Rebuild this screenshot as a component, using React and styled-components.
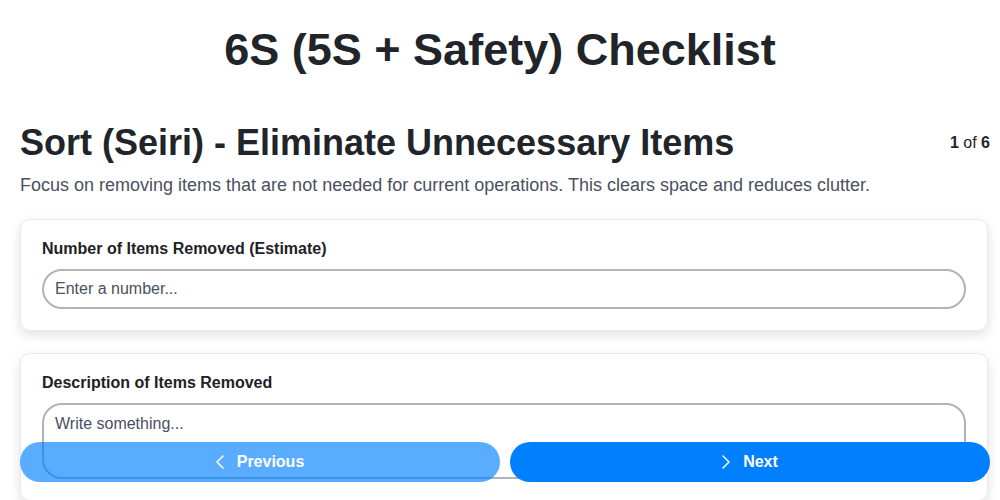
import React from "react";
import styled, { createGlobalStyle } from "styled-components";
import { ChevronLeft, ChevronRight } from "lucide-react";

const GlobalStyle = createGlobalStyle`
  html, body { margin: 0; padding: 0; background: #ffffff; }
  body { font-family: "Liberation Sans", Arial, sans-serif; color: #212529; }
  * { box-sizing: border-box; }
`;

const Header = styled.header`
  padding: 23px 0 0;
`;

const Title = styled.h1`
  margin: 0;
  font-size: 45px;
  line-height: 54px;
  font-weight: 700;
  text-align: center;
  color: #212529;
`;

const Page = styled.main`
  padding: 0 10px 0 20px;
`;

const StepHeader = styled.div`
  display: flex;
  align-items: center;
  justify-content: space-between;
  margin-top: 44px;
`;

const StepTitle = styled.h2`
  margin: 0;
  font-size: 36px;
  line-height: 43px;
  font-weight: 700;
  color: #212529;
`;

const Counter = styled.div`
  font-size: 16px;
  color: #212529;
  b { font-weight: 700; }
`;

const Description = styled.p`
  margin: 9px 0 0;
  font-size: 18px;
  line-height: 25px;
  color: #4a5060;
`;

const Card = styled.div`
  margin-top: ${p => p.$gap}px;
  margin-right: 2px;
  padding: 20px 21px 21px;
  border: 1px solid #e9e9ee;
  border-radius: 10px;
  background: #fff;
  box-shadow: 0 4px 12px rgba(0, 0, 0, 0.12);
`;

const Label = styled.label`
  display: block;
  font-size: 16px;
  line-height: 18px;
  font-weight: 700;
  color: #1e2125;
  margin-bottom: 11px;
`;

const Input = styled.input`
  display: block;
  width: 100%;
  height: 40px;
  padding: 0 11px;
  border: 2px solid #adb4bc;
  border-radius: 20px;
  font-family: "Liberation Sans", Arial, sans-serif;
  font-size: 16px;
  color: #212529;
  outline: none;
  &::placeholder { color: #4a5060; opacity: 1; }
`;

const TextArea = styled.textarea`
  display: block;
  width: 100%;
  height: 76px;
  padding: 8px 11px;
  border: 2px solid #adb4bc;
  border-radius: 20px;
  font-family: "Liberation Sans", Arial, sans-serif;
  font-size: 16px;
  line-height: 22px;
  color: #212529;
  resize: none;
  outline: none;
  &::placeholder { color: #4a5060; opacity: 1; }
`;

const NavBar = styled.div`
  position: fixed;
  left: 20px;
  right: 10px;
  bottom: 18px;
  display: grid;
  grid-template-columns: 1fr 1fr;
  gap: 10px;
`;

const NavButton = styled.button`
  display: flex;
  align-items: center;
  justify-content: center;
  gap: 5px;
  height: 40px;
  padding: 0 8px 0 0;
  border: none;
  border-radius: 20px;
  background: #0080ff;
  color: #fff;
  font-family: "Liberation Sans", Arial, sans-serif;
  font-size: 16px;
  font-weight: 700;
  opacity: ${p => (p.disabled ? 0.65 : 1)};
  cursor: pointer;
`;

export default function App() {
  return (
    <>
      <GlobalStyle />
      <Header>
        <Title>6S (5S + Safety) Checklist</Title>
      </Header>
      <Page>
        <StepHeader>
          <StepTitle>Sort (Seiri) - Eliminate Unnecessary Items</StepTitle>
          <Counter>
            <b>1</b> of <b>6</b>
          </Counter>
        </StepHeader>
        <Description>
          Focus on removing items that are not needed for current operations. This clears space and reduces clutter.
        </Description>
        <Card $gap={21}>
          <Label>Number of Items Removed (Estimate)</Label>
          <Input type="text" placeholder="Enter a number..." />
        </Card>
        <Card $gap={22}>
          <Label>Description of Items Removed</Label>
          <TextArea placeholder="Write something..." />
        </Card>
      </Page>
      <NavBar>
        <NavButton disabled>
          <ChevronLeft size={24} strokeWidth={1.5} />
          Previous
        </NavButton>
        <NavButton>
          <ChevronRight size={24} strokeWidth={1.5} />
          Next
        </NavButton>
      </NavBar>
    </>
  );
}
